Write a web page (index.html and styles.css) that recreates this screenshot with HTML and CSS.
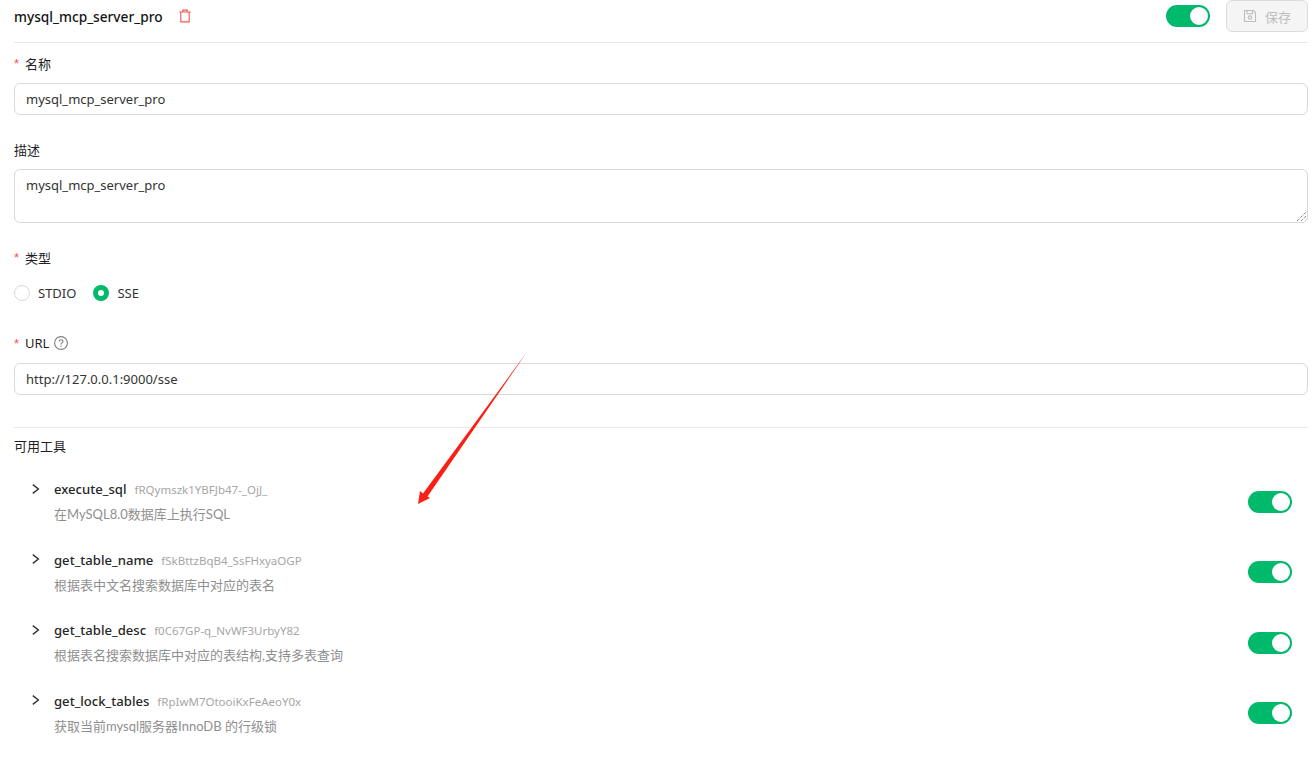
FILE: index.html
```html
<!DOCTYPE html>
<html lang="en">
<head>
    <meta charset="UTF-8">
    <meta name="viewport" content="width=device-width, initial-scale=1.0">
    <title>mysql_mcp_server_pro</title>
    <link rel="stylesheet" href="styles.css">
</head>
<body>
    <div class="page">
        <!-- Header -->
        <div class="header">
            <div class="header-left">
                <span class="server-name">mysql_mcp_server_pro</span>
                <svg class="trash" width="14" height="14" viewBox="0 0 14 14" fill="none" stroke="#f5544f" stroke-width="1.1">
                    <path d="M1.2 3h11.6M4.8 3V1.1h4.4V3M2.8 3v9.9h8.4V3"/>
                </svg>
            </div>
            <div class="header-right">
                <span class="switch"><span class="knob"></span></span>
                <button type="button" class="save-btn" disabled>
                    <svg width="14" height="14" viewBox="0 0 14 14" fill="none" stroke="#bdbdbd" stroke-width="1.1">
                        <path d="M1.5 1.5h9l2 2v9h-11zM4 1.5v3.2h5.5V1.5"/>
                        <circle cx="7" cy="8.6" r="1.7"/>
                    </svg>
                    保存
                </button>
            </div>
        </div>

        <!-- Form -->
        <div class="form-item">
            <label class="form-label"><span class="req">*</span>名称</label>
            <div class="input">mysql_mcp_server_pro</div>
        </div>

        <div class="form-item">
            <label class="form-label">描述</label>
            <div class="input textarea">
                mysql_mcp_server_pro
                <svg class="resizer" width="9" height="9" viewBox="0 0 9 9" stroke="#555" stroke-width="1" stroke-dasharray="1 1">
                    <path d="M0 9L9 0M4 9L9 4"/>
                </svg>
            </div>
        </div>

        <div class="form-item">
            <label class="form-label"><span class="req">*</span>类型</label>
            <div class="radio-group">
                <span class="radio"><span class="radio-dot"></span>STDIO</span>
                <span class="radio"><span class="radio-dot checked"></span>SSE</span>
            </div>
        </div>

        <div class="form-item">
            <label class="form-label"><span class="req">*</span>URL
                <svg class="help" width="14" height="14" viewBox="0 0 14 14" fill="none" stroke="#808080" stroke-width="1.1">
                    <circle cx="7" cy="7" r="6.4"/>
                    <path d="M5.1 5.6C5.1 3.2 8.9 3.2 8.9 5.5C8.9 6.9 7 7 7 8.5"/>
                    <path d="M7 9.6v1.2"/>
                </svg>
            </label>
            <div class="input">http://127.0.0.1:9000/sse</div>
        </div>

        <!-- Tools -->
        <div class="tools">
            <h2 class="tools-title">可用工具</h2>

            <div class="tool">
                <svg class="chevron" width="10" height="10" viewBox="0 0 10 10" fill="none" stroke="#333" stroke-width="1.4"><path d="M1.8 .6L7.4 5 1.8 9.4"/></svg>
                <div class="tool-text">
                    <div class="tool-head"><span class="tool-name">execute_sql</span><span class="tool-id">fRQymszk1YBFJb47-_OjJ_</span></div>
                    <div class="tool-desc">在MySQL8.0数据库上执行SQL</div>
                </div>
                <span class="switch"><span class="knob"></span></span>
            </div>

            <div class="tool">
                <svg class="chevron" width="10" height="10" viewBox="0 0 10 10" fill="none" stroke="#333" stroke-width="1.4"><path d="M1.8 .6L7.4 5 1.8 9.4"/></svg>
                <div class="tool-text">
                    <div class="tool-head"><span class="tool-name">get_table_name</span><span class="tool-id">fSkBttzBqB4_SsFHxyaOGP</span></div>
                    <div class="tool-desc">根据表中文名搜索数据库中对应的表名</div>
                </div>
                <span class="switch"><span class="knob"></span></span>
            </div>

            <div class="tool">
                <svg class="chevron" width="10" height="10" viewBox="0 0 10 10" fill="none" stroke="#333" stroke-width="1.4"><path d="M1.8 .6L7.4 5 1.8 9.4"/></svg>
                <div class="tool-text">
                    <div class="tool-head"><span class="tool-name">get_table_desc</span><span class="tool-id">f0C67GP-q_NvWF3UrbyY82</span></div>
                    <div class="tool-desc">根据表名搜索数据库中对应的表结构,支持多表查询</div>
                </div>
                <span class="switch"><span class="knob"></span></span>
            </div>

            <div class="tool">
                <svg class="chevron" width="10" height="10" viewBox="0 0 10 10" fill="none" stroke="#333" stroke-width="1.4"><path d="M1.8 .6L7.4 5 1.8 9.4"/></svg>
                <div class="tool-text">
                    <div class="tool-head"><span class="tool-name">get_lock_tables</span><span class="tool-id">fRpIwM7OtooiKxFeAeoY0x</span></div>
                    <div class="tool-desc">获取当前mysql服务器InnoDB 的行级锁</div>
                </div>
                <span class="switch"><span class="knob"></span></span>
            </div>
        </div>

        <!-- Red annotation arrow drawn over the page -->
        <svg class="arrow" width="130" height="170" viewBox="0 0 130 170">
            <polygon points="109,0 9.5,144.5 12,146 0,152 2,139 5,141.5" fill="#fb1f14"/>
        </svg>
    </div>
</body>
</html>
```

FILE: styles.css
```css
/* General Styles */
html, body {
    margin: 0;
    padding: 0;
    height: 100%;
    overflow: hidden;
}

body {
    font-family: 'Noto Sans', 'Noto Sans CJK SC', sans-serif;
    font-size: 13px;
    color: #1f1f1f;
    background-color: #fff;
}

.page {
    position: relative;
    height: 759px;
    padding: 0 8px 0 14px;
    box-sizing: border-box;
}

/* Header */
.header {
    display: flex;
    align-items: center;
    justify-content: space-between;
    height: 32px;
    padding-bottom: 10px;
    margin-bottom: 9px;
    border-bottom: 1px solid #e8e8e8;
}

.header-left {
    display: flex;
    align-items: center;
}

.server-name {
    font-size: 13.7px;
    font-weight: 500;
    color: #141414;
}

.trash {
    margin-left: 15px;
}

.header-right {
    display: flex;
    align-items: center;
    gap: 16px;
}

.save-btn {
    display: flex;
    align-items: center;
    justify-content: center;
    gap: 8px;
    width: 82px;
    height: 32px;
    padding: 0;
    font-family: inherit;
    font-size: 13px;
    color: #bdbdbd;
    background-color: #f5f5f5;
    border: 1px solid #dcdcdc;
    border-radius: 6px;
}

/* Switch */
.switch {
    display: block;
    position: relative;
    flex: none;
    width: 44px;
    height: 22px;
    border-radius: 11px;
    background-color: #00b96b;
}

.knob {
    position: absolute;
    top: 2px;
    right: 2px;
    width: 18px;
    height: 18px;
    border-radius: 50%;
    background-color: #fff;
}

/* Form */
.form-item {
    margin-bottom: 23px;
}

.form-label {
    display: flex;
    align-items: center;
    height: 22px;
    margin-bottom: 9px;
    color: #1f1f1f;
}

.req {
    width: 11px;
    color: #ff4d4f;
    font-family: 'Liberation Sans', sans-serif;
}

.help {
    margin-left: 5px;
}

.input {
    position: relative;
    height: 32px;
    padding: 0 11px;
    line-height: 30px;
    color: #333;
    background-color: #fff;
    border: 1px solid #d9d9d9;
    border-radius: 6px;
    box-sizing: border-box;
}

.textarea {
    height: 54px;
}

.resizer {
    position: absolute;
    right: 1px;
    bottom: 1px;
}

.radio-group {
    display: flex;
    align-items: center;
    gap: 17px;
    height: 32px;
}

.radio {
    display: flex;
    align-items: center;
    gap: 8px;
    color: #333;
}

.radio-dot {
    width: 16px;
    height: 16px;
    border: 1px solid #d9d9d9;
    border-radius: 50%;
    box-sizing: border-box;
}

.radio-dot.checked {
    border: 5px solid #00b96b;
}

/* Tools */
.tools {
    margin-top: 32px;
    padding-top: 7px;
    border-top: 1px solid #e8e8e8;
}

.tools-title {
    margin: 0 0 19.5px;
    font-size: 13px;
    font-weight: 400;
    line-height: 22px;
    color: #1f1f1f;
}

.tool {
    display: flex;
    align-items: center;
    height: 50px;
    margin-bottom: 20.5px;
    padding-right: 16px;
}

.chevron {
    align-self: flex-start;
    margin: 7px 13px 0 17px;
}

.tool-text {
    flex: 1;
}

.tool-head {
    display: flex;
    align-items: baseline;
    gap: 8px;
    margin-bottom: 4px;
    line-height: 20px;
}

.tool-name {
    font-size: 13.1px;
    font-weight: 500;
    color: #262626;
}

.tool-id {
    font-size: 11.5px;
    color: #a6a6a6;
}

.tool-desc {
    font-family: 'Lato', 'Noto Sans CJK SC', sans-serif;
    line-height: 20px;
    color: #8f8f8f;
}

.arrow {
    position: absolute;
    top: 352px;
    left: 418px;
}
```
